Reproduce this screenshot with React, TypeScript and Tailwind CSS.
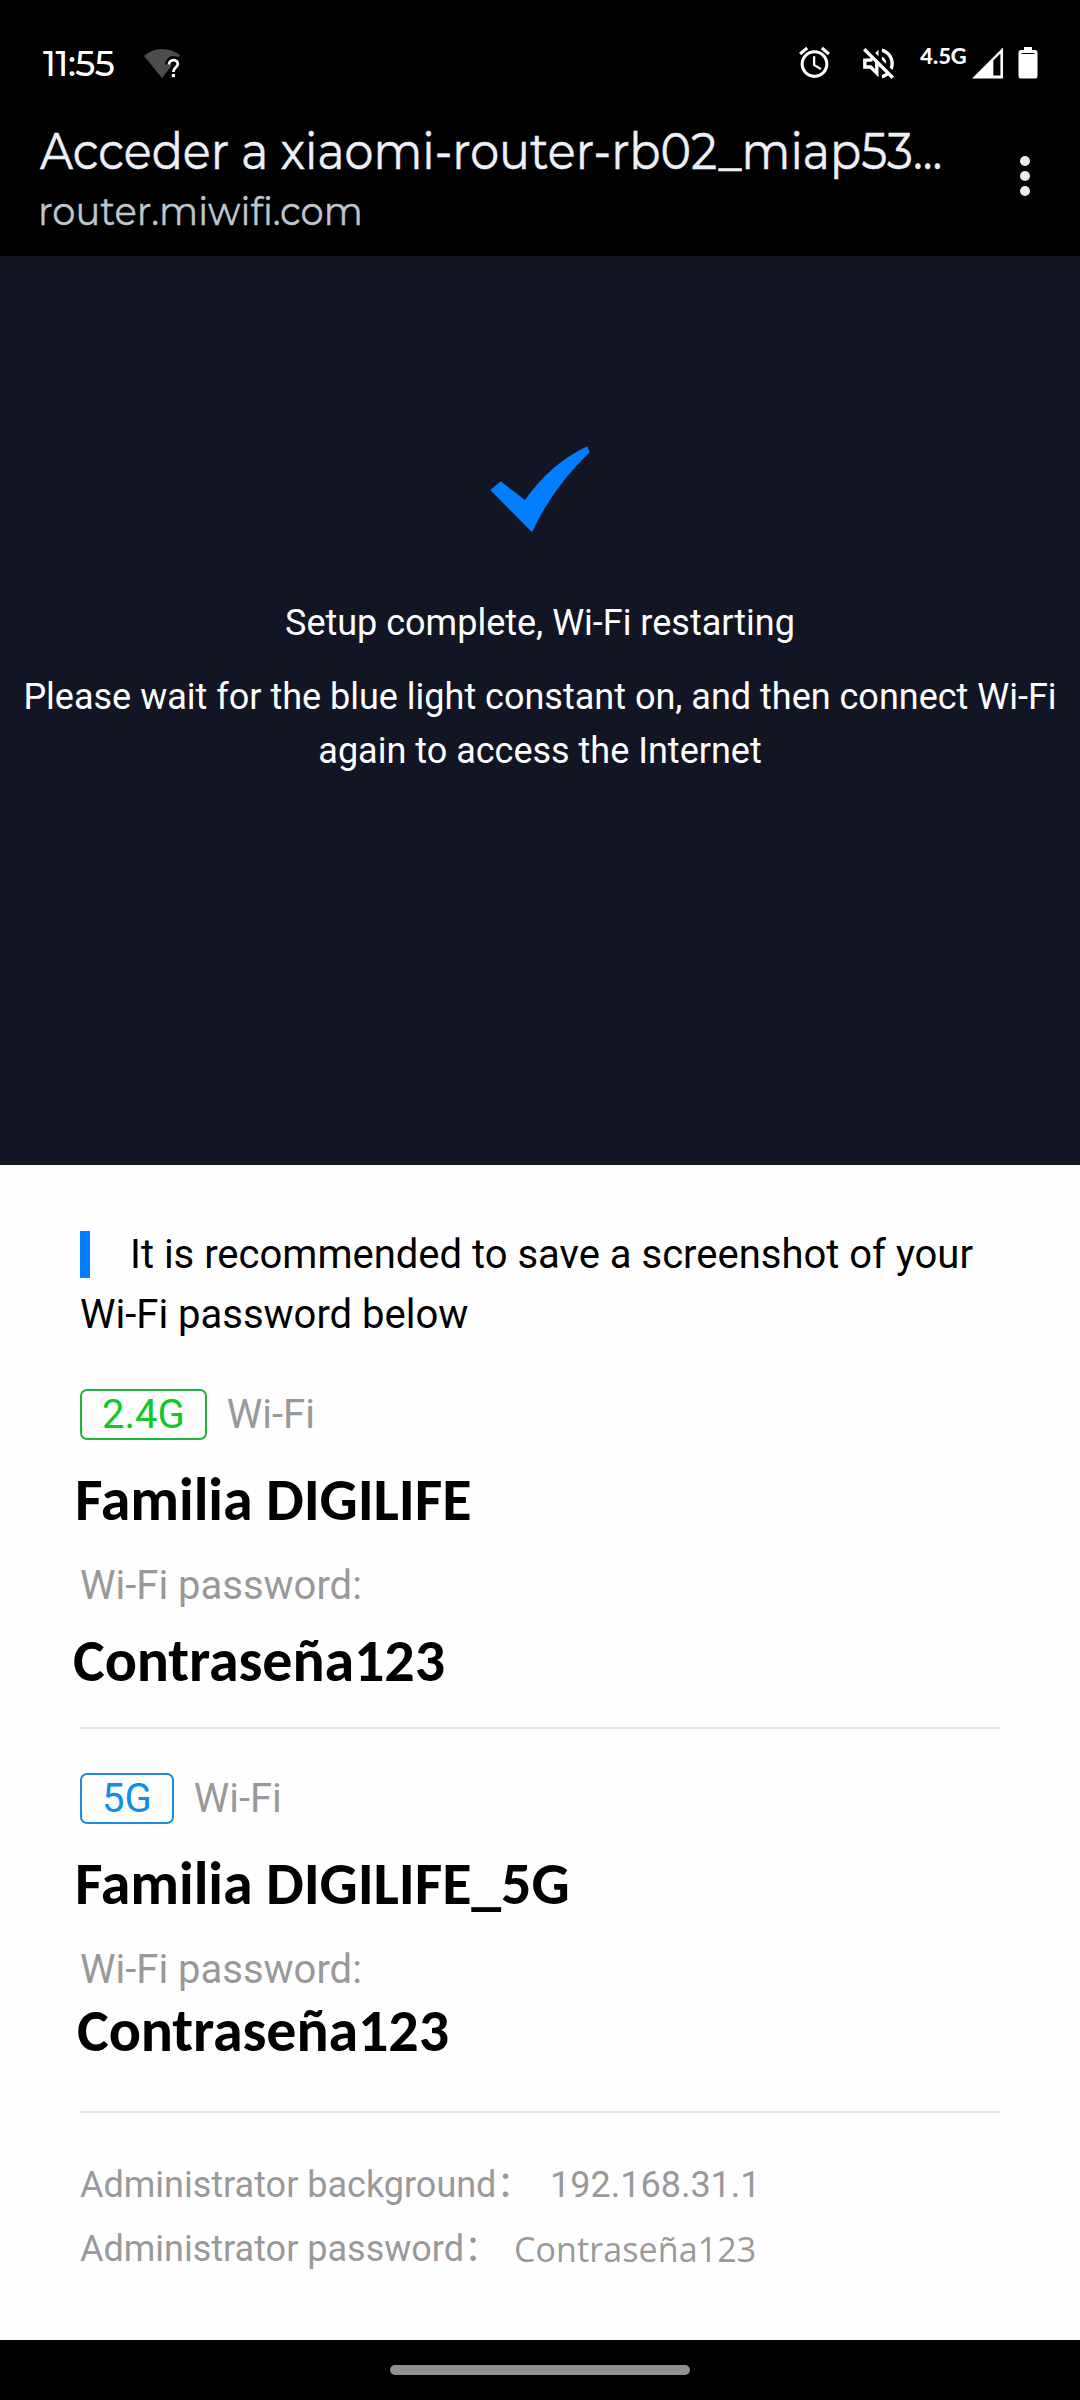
import { MdAlarm, MdOutlineVolumeOff } from "react-icons/md";

function WifiUnknown() {
  return (
    <svg className="ml-[28px] mt-[48px] h-[32px] w-[40px]" viewBox="0 0 40 32">
      <path d="M0 8 Q8 1 18 1 Q28 1 36 7 L18 30 Z" fill="#4d4d4d" />
      <path
        d="M25 16.500 C25.200 10.500 34 10.500 34 16 C34 19.500 29.500 19.500 29.400 24 M29.400 26.200 V29"
        fill="none"
        stroke="#000"
        strokeWidth="8"
      />
      <path
        d="M25 16.500 C25.200 10.800 33.800 10.800 33.800 16 C33.800 19.300 29.400 19.500 29.400 24"
        fill="none"
        stroke="#fff"
        strokeWidth="2.8"
      />
      <rect x="27.800" y="26" width="3.200" height="3.200" fill="#fff" />
    </svg>
  );
}

function StatusBar() {
  return (
    <div className="flex h-[112px] items-start text-white">
      <div className="ml-[43px] mt-[40px] w-[73px] whitespace-nowrap font-[Montserrat,Inter,sans-serif] text-[35px] font-medium leading-[48px] tracking-[-0.5px]">
        11:55
      </div>
      <WifiUnknown />
      <MdAlarm className="ml-[612px] mt-[44px] size-[37px] shrink-0" />
      <MdOutlineVolumeOff className="ml-[25px] mt-[43px] size-[41px] shrink-0" />
      <div className="ml-[21px] mt-[42px] w-[48px] whitespace-nowrap font-[Carlito,Lato,sans-serif] text-[25px] font-bold leading-[28px] tracking-[-0.4px]">
        4.5G
      </div>
      <svg className="ml-[4px] mt-[47px] h-[32px] w-[32px] shrink-0" viewBox="0 0 33 32">
        <path fillRule="evenodd" d="M0 32 L32 0 V32 Z M22 13.500 V29 H29.300 V6.200 Z" fill="#fff" />
      </svg>
      <svg className="ml-[14px] mt-[46px] h-[33px] w-[20px] shrink-0" viewBox="0 0 20 33">
        <path
          d="M6 1 H14 V4 H17 Q19.500 4 19.500 6.500 V30 Q19.500 32.500 17 32.500 H3 Q0.500 32.500 0.500 30 V6.500 Q0.500 4 3 4 H6 Z"
          fill="#fff"
        />
        <path d="M3.500 7.500 H16.500" stroke="#000" strokeWidth="1" />
      </svg>
    </div>
  );
}

function TitleBar() {
  return (
    <div className="flex h-[144px] justify-between font-[Montserrat,Inter,sans-serif]">
      <div className="ml-[40px] w-[920px] whitespace-nowrap [font-variant-ligatures:none]">
        <h1 className="mt-[12px] origin-left scale-x-[0.921] text-[50px] leading-[56px] text-[#eff0f7] [-webkit-text-stroke:0.5px]">
          Acceder a xiaomi-router-rb02_miap53...
        </h1>
        <p className="-ml-[2px] mt-[7px] origin-left scale-x-[0.922] text-[40px] leading-[48px] text-[#bfc6cc] [-webkit-text-stroke:0.4px]">
          router.miwifi.com
        </p>
      </div>
      <div className="mr-[50px] mt-[44px] flex flex-col gap-[5px]">
        <span className="size-[10px] rounded-full bg-[#e9eef6]" />
        <span className="size-[10px] rounded-full bg-[#e9eef6]" />
        <span className="size-[10px] rounded-full bg-[#e9eef6]" />
      </div>
    </div>
  );
}

function Hero() {
  return (
    <section className="flex h-[909px] flex-col items-center bg-[#121524] text-center text-[36px] leading-[54px] text-white">
      <svg className="mt-[188px] h-[90px] w-[102px]" viewBox="489 444 102 90">
        <path
          d="M490.300 490 L500.700 481.300 L525 500 Q550 464 587.300 446.300 L589.700 452.300 Q552.600 487.700 532 532.300 Z"
          fill="#007eff"
        />
      </svg>
      <p className="mt-[62px]">Setup complete, Wi-Fi restarting</p>
      <p className="mt-[20px] w-[1060px]">
        Please wait for the blue light constant on, and then connect Wi-Fi again to access the Internet
      </p>
    </section>
  );
}

function BandLabel({ band, className }: { band: string; className: string }) {
  return (
    <div className="flex h-[51px] text-[40px] leading-[51px] text-[#999]">
      <span className={`rounded-[7px] border-2 px-[20px] leading-[47px] ${className}`}>{band}</span>
      <span className="ml-[20px]">Wi-Fi</span>
    </div>
  );
}

export default function App() {
  return (
    <div className="flex h-[2400px] w-[1080px] flex-col overflow-hidden bg-black font-[Roboto,sans-serif]">
      <StatusBar />
      <TitleBar />
      <Hero />
      <main className="h-[1175px] bg-[#fefefe] px-[80px]">
        <p className="pt-[60px] text-[40px] leading-[60px] text-black">
          <span className="mr-[40px] inline-block h-[47px] w-[10px] bg-[#007eff] align-[-10px]" />
          It is recommended to save a screenshot of your Wi-Fi password below
        </p>

        <section className="mt-[44px] h-[340px] border-b-2 border-[#e5e5e5]">
          <BandLabel band="2.4G" className="border-[#1fb43c] text-[#0fc925]" />
          <p className="-ml-[5px] mt-[30px] font-[Carlito,Lato,sans-serif] text-[60px] font-bold leading-[60px] tracking-[-0.1px] text-black">
            Familia DIGILIFE
          </p>
          <p className="mt-[26px] text-[40px] leading-[60px] text-[#999]">Wi-Fi password:</p>
          <p className="-ml-[7px] mt-[15px] font-[Carlito,Lato,sans-serif] text-[60px] font-bold leading-[60px] tracking-[-0.1px] text-black">
            Contraseña123
          </p>
        </section>

        <section className="mt-[44px] h-[340px] border-b-2 border-[#e5e5e5]">
          <BandLabel band="5G" className="border-[#1b8ce0] text-[#108ee9]" />
          <p className="-ml-[5px] mt-[30px] font-[Carlito,Lato,sans-serif] text-[60px] font-bold leading-[60px] tracking-[-0.1px] text-black">
            Familia DIGILIFE_5G
          </p>
          <p className="mt-[26px] text-[40px] leading-[60px] text-[#999]">Wi-Fi password:</p>
          <p className="-ml-[3px] mt-px font-[Carlito,Lato,sans-serif] text-[60px] font-bold leading-[60px] tracking-[-0.1px] text-black">
            Contraseña123
          </p>
        </section>

        <dl className="mt-[40px] text-[36px] leading-[64px] text-[#999]">
          <div className="flex h-[64px]">
            <dt className="w-[470px]">
              Administrator background<span className="font-['Noto_Sans_CJK_SC',sans-serif] leading-none">：</span>
            </dt>
            <dd>192.168.31.1</dd>
          </div>
          <div className="flex h-[64px]">
            <dt className="w-[434px]">
              Administrator password<span className="font-['Noto_Sans_CJK_SC',sans-serif] leading-none">：</span>
            </dt>
            <dd className="font-['Open_Sans',sans-serif] text-[34px] tracking-[0.1px]">Contraseña123</dd>
          </div>
        </dl>
      </main>
      <div className="flex h-[60px] justify-center pt-[25px]">
        <div className="h-[10px] w-[300px] rounded-full bg-[#919191]" />
      </div>
    </div>
  );
}
